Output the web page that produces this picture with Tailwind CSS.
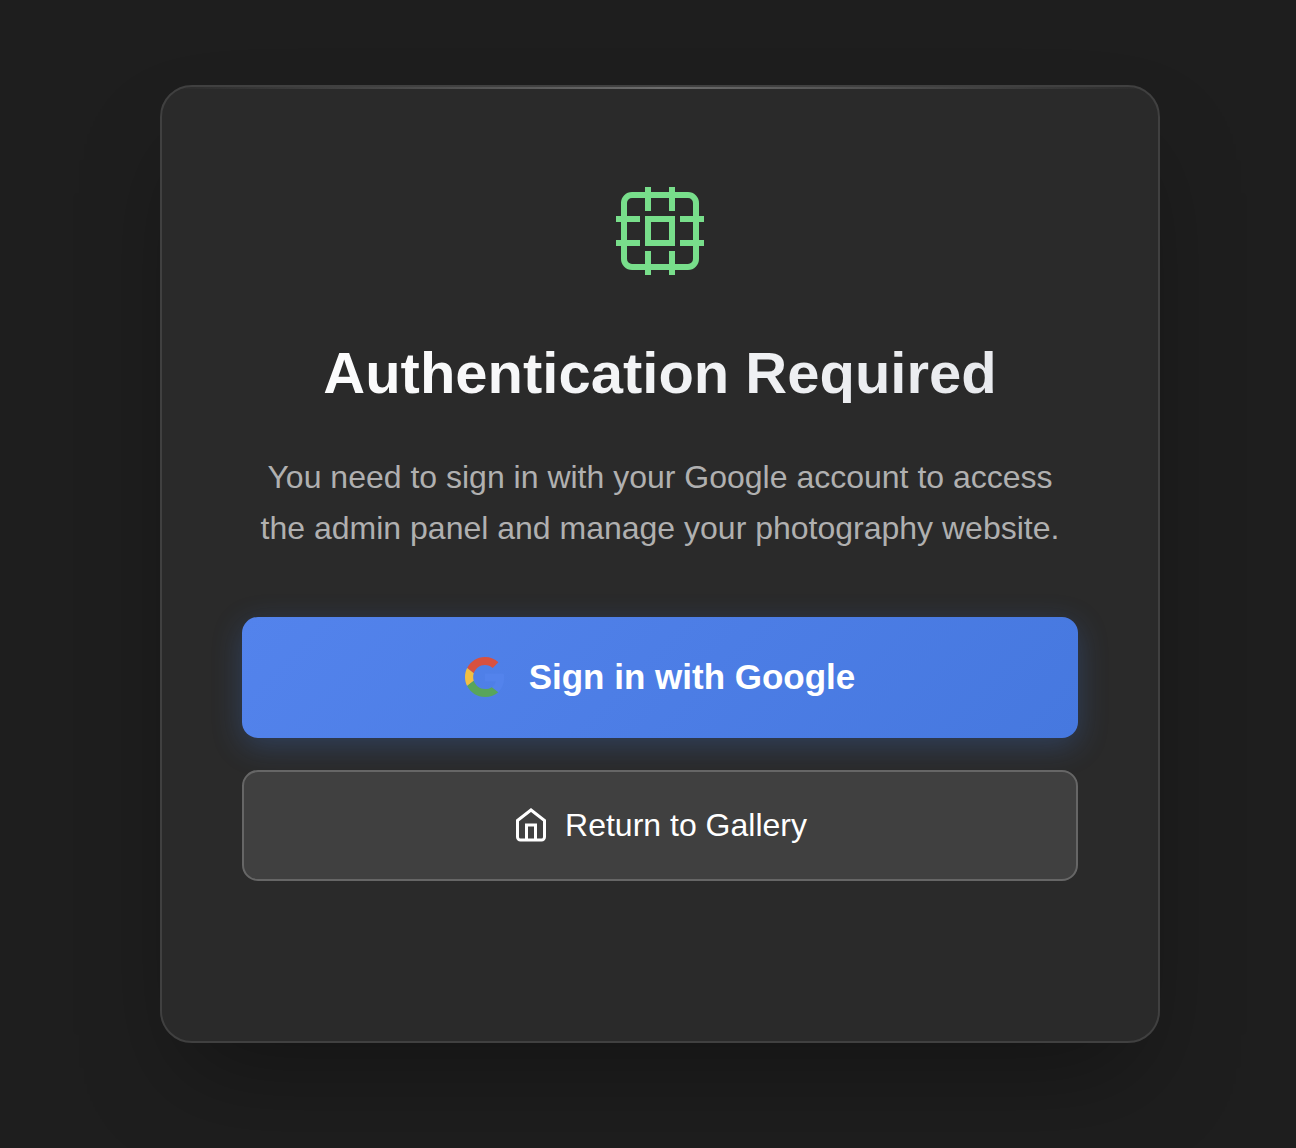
<!DOCTYPE html>
<html lang="en">
<head>
<meta charset="utf-8">
<meta name="viewport" content="width=device-width, initial-scale=1">
<title>Authentication Required</title>
<script src="https://cdn.jsdelivr.net/npm/@tailwindcss/browser@4"></script>
</head>
<body class="min-h-screen bg-[#1e1e1e] font-['Liberation_Sans',Arial,sans-serif] text-white">
<main class="flex justify-center pt-[85px] pr-4 pb-[105px] pl-10">
  <section class="relative w-full max-w-[1000px] overflow-hidden rounded-[32px] border-2 border-[#404040] bg-[#2a2a2a] px-20 pt-24 pb-40 text-center shadow-[0_50px_100px_-24px_rgba(0,0,0,0.35)]">
    <div class="absolute inset-x-0 top-0 h-[2px] bg-linear-to-r from-transparent via-[#6c6c6c] to-transparent"></div>
    <svg class="mx-auto block size-24" viewBox="0 0 24 24" fill="none" stroke="#78de8b" stroke-width="1.5" aria-hidden="true">
      <rect x="3" y="3" width="18" height="18" rx="2"/>
      <rect x="9" y="9" width="6" height="6"/>
      <path d="M9 1v6M15 1v6M9 17v6M15 17v6M1 9h6M1 15h6M17 9h6M17 15h6"/>
    </svg>
    <h1 class="mt-16 bg-linear-[135deg,#ffffff,#e5e7eb] bg-clip-text text-[58px] leading-[60px] font-bold text-transparent">Authentication Required</h1>
    <p class="mt-[49px] text-[32px] leading-[51px] text-[#b0b0b0]">You need to sign in with your Google account to access the admin panel and manage your photography website.</p>
    <button type="button" class="mt-[63px] flex w-full items-center justify-center gap-6 rounded-2xl bg-linear-[135deg,#5383ec,#4678df] pt-10 pb-[41px] text-[35px] leading-10 font-bold shadow-[0_8px_30px_rgba(66,133,244,0.25)]">
      <svg class="size-10 shrink-0" viewBox="0 0 48 48" aria-hidden="true">
        <path fill="#d85140" d="M24 9.5c3.54 0 6.71 1.22 9.21 3.6l6.85-6.85C35.9 2.38 30.47 0 24 0 14.62 0 6.51 5.38 2.56 13.22l7.98 6.19C12.43 13.72 17.74 9.5 24 9.5z"/>
        <path fill="#5383ec" d="M46.98 24.55c0-1.57-.15-3.09-.38-4.55H24v9.02h12.94c-.58 2.96-2.26 5.48-4.78 7.18l7.73 6c4.51-4.18 7.09-10.36 7.09-17.65z"/>
        <path fill="#f1bf42" d="M10.53 28.59c-.48-1.45-.76-2.99-.76-4.59s.27-3.14.76-4.59l-7.98-6.19C.92 16.46 0 20.12 0 24c0 3.88.92 7.54 2.56 10.78l7.97-6.19z"/>
        <path fill="#58a55c" d="M24 48c6.48 0 11.93-2.13 15.89-5.81l-7.73-6c-2.15 1.45-4.92 2.3-8.16 2.3-6.26 0-11.57-4.22-13.47-9.91l-7.98 6.19C6.51 42.62 14.62 48 24 48z"/>
      </svg>
      Sign in with Google
    </button>
    <a href="#" class="mt-8 flex w-full items-center justify-center gap-4 rounded-2xl border-2 border-[#666] bg-[#404040] pt-[35px] pb-9 text-[32px] leading-9">
      <svg class="size-9 shrink-0" viewBox="0 0 24 24" fill="none" stroke="currentColor" stroke-width="2" aria-hidden="true">
        <path d="M3 9l9-7 9 7v11a2 2 0 0 1-2 2H5a2 2 0 0 1-2-2z"/>
        <path d="M9 22V12h6v10"/>
      </svg>
      Return to Gallery
    </a>
  </section>
</main>
</body>
</html>
